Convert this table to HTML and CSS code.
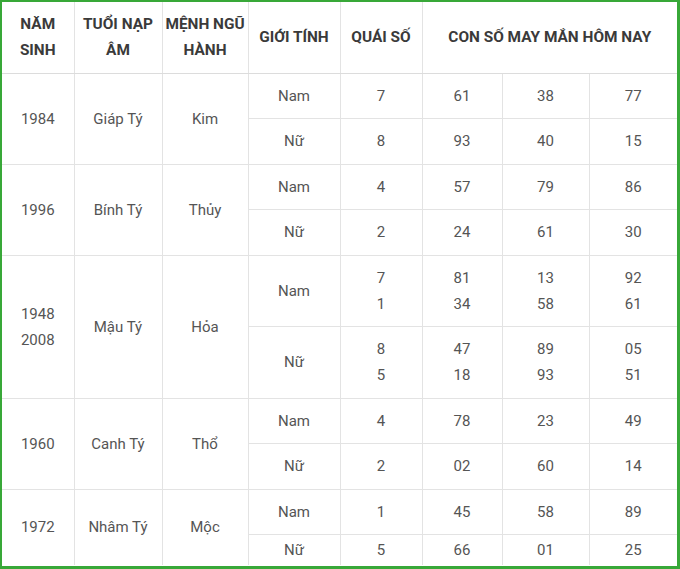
FILE: index.html
```html
<!DOCTYPE html>
<html lang="vi">
<head>
<meta charset="utf-8">
<link rel="stylesheet" href="styles.css">
</head>
<body>
<div class="frame">
<table class="lucky">
<colgroup>
<col class="c1"><col class="c2"><col class="c3"><col class="c4"><col class="c5"><col class="c6"><col class="c7"><col class="c8">
</colgroup>
<thead>
<tr>
<th>NĂM<br>SINH</th>
<th>TUỔI NẠP<br>ÂM</th>
<th>MỆNH NGŨ<br>HÀNH</th>
<th>GIỚI TÍNH</th>
<th>QUÁI SỐ</th>
<th colspan="3">CON SỐ MAY MẮN HÔM NAY</th>
</tr>
</thead>
<tbody>
<tr><td rowspan="2">1984</td><td rowspan="2">Giáp Tý</td><td rowspan="2">Kim</td><td>Nam</td><td>7</td><td>61</td><td>38</td><td>77</td></tr>
<tr><td>Nữ</td><td>8</td><td>93</td><td>40</td><td>15</td></tr>
<tr><td rowspan="2">1996</td><td rowspan="2">Bính Tý</td><td rowspan="2">Thủy</td><td>Nam</td><td>4</td><td>57</td><td>79</td><td>86</td></tr>
<tr><td>Nữ</td><td>2</td><td>24</td><td>61</td><td>30</td></tr>
<tr><td rowspan="2">1948<br>2008</td><td rowspan="2">Mậu Tý</td><td rowspan="2">Hỏa</td><td>Nam</td><td>7<br>1</td><td>81<br>34</td><td>13<br>58</td><td>92<br>61</td></tr>
<tr><td>Nữ</td><td>8<br>5</td><td>47<br>18</td><td>89<br>93</td><td>05<br>51</td></tr>
<tr><td rowspan="2">1960</td><td rowspan="2">Canh Tý</td><td rowspan="2">Thổ</td><td>Nam</td><td>4</td><td>78</td><td>23</td><td>49</td></tr>
<tr><td>Nữ</td><td>2</td><td>02</td><td>60</td><td>14</td></tr>
<tr><td rowspan="2">1972</td><td rowspan="2">Nhâm Tý</td><td rowspan="2">Mộc</td><td>Nam</td><td>1</td><td>45</td><td>58</td><td>89</td></tr>
<tr class="last"><td>Nữ</td><td>5</td><td>66</td><td>01</td><td>25</td></tr>
</tbody>
</table>
</div>
</body>
</html>
```
FILE: styles.css
```css
html, body {
  margin: 0;
  padding: 0;
  background: #fff;
}
.frame {
  box-sizing: border-box;
  width: 680px;
  height: 569px;
  overflow: hidden;
  border: 2px solid #38a838;
  border-right-width: 3px;
  border-bottom-width: 3px;
  background: #fff;
}
.lucky {
  width: 100%;
  border-collapse: collapse;
  border: hidden;
  table-layout: fixed;
  font-family: Roboto, "Liberation Sans", sans-serif;
  font-size: 15px;
  color: #555;
}
.c1 { width: 72px; }
.c2 { width: 88px; }
.c3 { width: 86px; }
.c4 { width: 92px; }
.c5 { width: 82px; }
.c6 { width: 80px; }
.c7 { width: 87px; }
.c8 { width: auto; }
.lucky th,
.lucky td {
  border: 1px solid #e3e3e3;
  padding: 9.25px 2px;
  line-height: 26px;
  text-align: center;
  vertical-align: middle;
}
.lucky th {
  font-size: 15.4px;
  font-weight: 700;
  color: #3a3a3a;
  border-bottom-color: #dcdcdc;
}
.lucky .last td {
  padding-top: 2px;
  padding-bottom: 2px;
}
```
